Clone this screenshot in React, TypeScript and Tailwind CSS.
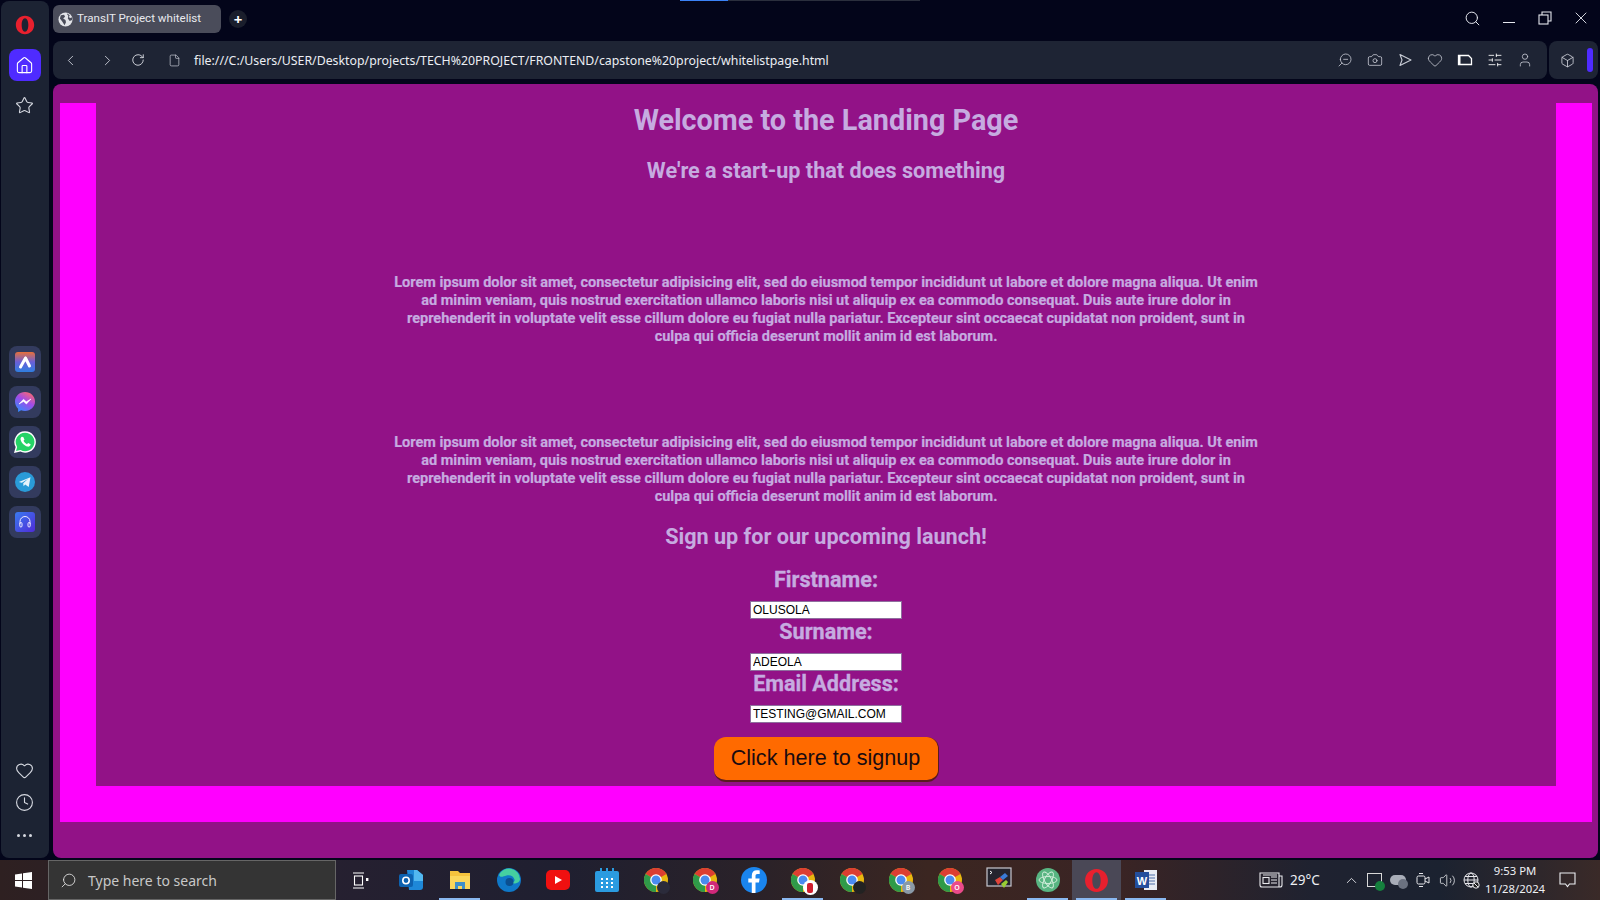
import { Box, Camera, ChevronLeft, ChevronRight, ChevronUp, Clock, File, Heart, Home, RotateCw, Search, SlidersHorizontal, Star, User, Volume2, X, ZoomOut } from "lucide-react";
import type { ReactNode } from "react";

const LOREM =
  "Lorem ipsum dolor sit amet, consectetur adipisicing elit, sed do eiusmod tempor incididunt ut labore et dolore magna aliqua. Ut enim ad minim veniam, quis nostrud exercitation ullamco laboris nisi ut aliquip ex ea commodo consequat. Duis aute irure dolor in reprehenderit in voluptate velit esse cillum dolore eu fugiat nulla pariatur. Excepteur sint occaecat cupidatat non proident, sunt in culpa qui officia deserunt mollit anim id est laborum.";

function OperaLogo({ size }: { size: number }) {
  return (
    <svg width={size} height={size} viewBox="0 0 24 24">
      <path
        fillRule="evenodd"
        fill="#e8202e"
        d="M12 1C5.800 1 1 5.900 1 12s4.800 11 11 11 11-4.900 11-11S18.200 1 12 1Zm0 3c2.500 0 4 3.600 4 8s-1.500 8-4 8-4-3.600-4-8 1.500-8 4-8Z"
      />
    </svg>
  );
}

function Tile({ children }: { children: ReactNode }) {
  return <div className="flex h-8 w-8 items-center justify-center rounded-lg bg-[#333b5e]">{children}</div>;
}

function Sidebar() {
  return (
    <aside className="ml-px mr-1 flex w-[48px] shrink-0 flex-col items-center rounded-lg bg-[#1c2333] pr-px pt-[14px]">
      <OperaLogo size={20} />
      <div className="mt-[14px] flex h-8 w-8 items-center justify-center rounded-lg bg-[#4f2bff]">
        <Home size={19} strokeWidth={1.4} className="text-white" />
      </div>
      <Star size={19} strokeWidth={1.4} className="mt-[15px] text-[#d5d8e0]" />
      <div className="mt-[231px] flex flex-col gap-2">
        <Tile>
          <svg width="20" height="20" viewBox="0 0 20 20">
            <defs>
              <linearGradient id="aria" x1="0.5" y1="0" x2="0.5" y2="1">
                <stop offset="0" stopColor="#e8703a" />
                <stop offset="0.5" stopColor="#6a5fd8" />
                <stop offset="1" stopColor="#2f7fe0" />
              </linearGradient>
            </defs>
            <rect width="20" height="20" rx="3" fill="url(#aria)" />
            <path d="M10.500 6 5.500 15M10.500 6l4 8" stroke="#fff" strokeWidth="3" strokeLinecap="round" />
          </svg>
        </Tile>
        <Tile>
          <svg width="20" height="20" viewBox="0 0 20 20">
            <defs>
              <linearGradient id="msg" x1="0.2" y1="1" x2="0.8" y2="0">
                <stop offset="0" stopColor="#2f8cff" />
                <stop offset="0.55" stopColor="#a04be8" />
                <stop offset="1" stopColor="#ff6a6a" />
              </linearGradient>
            </defs>
            <path d="M10 0C4.400 0 0 4.100 0 9.600c0 2.900 1.200 5.400 3.100 7.100V20l3-1.700c1.200.4 2.500.6 3.900.6 5.600 0 10-4.100 10-9.400S15.600 0 10 0Z" fill="url(#msg)" />
            <path d="m4 12 4.500-4.700 2.800 2.500L16 7l-4.600 5-2.800-2.600Z" fill="#fff" stroke="#fff" strokeWidth="0.6" strokeLinejoin="round" />
          </svg>
        </Tile>
        <Tile>
          <svg width="22" height="22" viewBox="0 0 22 22">
            <path d="M11 1a10 10 0 0 0-8.600 15L1 21l5.200-1.300A10 10 0 1 0 11 1Z" fill="#25d366" stroke="#fff" strokeWidth="1.400" />
            <path d="M7.800 5.800c-.9.500-1.500 1.600-1.200 3 .7 3 3.700 6 6.800 6.800 1.300.3 2.500-.3 3-1.300l.2-1-2.500-1.300-1.100 1.200c-1.500-.6-2.800-1.900-3.500-3.400l1-1.100-1.200-2.600Z" fill="#fff" />
          </svg>
        </Tile>
        <Tile>
          <svg width="20" height="20" viewBox="0 0 20 20">
            <circle cx="10" cy="10" r="10" fill="#2a9bd8" />
            <path d="M3.800 10 15.500 5.200 13.700 15l-3.500-2.600-1.600 1.900-.4-3 5-4.500-6.300 3.900Z" fill="#e8f4fb" />
          </svg>
        </Tile>
        <Tile>
          <div className="flex h-5 w-5 items-center justify-center rounded-[3px] bg-[linear-gradient(135deg,#3a7bf0,#4f2bd8)]">
            <svg width="14" height="14" viewBox="0 0 14 14" fill="none" stroke="#f0eaff" strokeWidth="1">
              <path d="M2 9V6.500a5 5 0 0 1 10 0V9" />
              <rect x="1.800" y="7.500" width="2.200" height="4.500" rx="1.100" />
              <rect x="10" y="7.500" width="2.200" height="4.500" rx="1.100" />
            </svg>
          </div>
        </Tile>
      </div>
      <Heart size={19} strokeWidth={1.4} className="mt-auto text-[#d5d8e0]" />
      <Clock size={19} strokeWidth={1.4} className="mt-[13px] text-[#d5d8e0]" />
      <div className="mb-[21px] mt-[22px] flex gap-[3px]">
        <span className="h-[3px] w-[3px] rounded-full bg-[#d5d8e0]" />
        <span className="h-[3px] w-[3px] rounded-full bg-[#d5d8e0]" />
        <span className="h-[3px] w-[3px] rounded-full bg-[#d5d8e0]" />
      </div>
    </aside>
  );
}

function TabRow() {
  return (
    <div className="flex h-[40px] items-start pt-[4px]">
      <div className="flex h-[28px] w-[168px] items-center rounded-md bg-[#4a4c5a] pl-[5px]">
        <svg width="15" height="15" viewBox="0 0 16 16" className="mr-[4px]">
          <circle cx="8" cy="8" r="7.500" fill="#e2e3e8" />
          <path d="M3 3.500 6.500 3l1 2-2 2 2.500 1.500.5 2.500-1.500 3L4.500 10 2 7ZM10 1.500l2.500 2-1 2 2 1 1.500-1v3l-2.500 1-2-2.500.5-3-1.500-2Z" fill="#4a4c5a" />
        </svg>
        <span className="whitespace-nowrap font-['Roboto',sans-serif] text-[11.600px] text-[#e8e9ee]">TransIT Project whitelist</span>
      </div>
      <div className="ml-2 mt-[5px] flex h-[18px] w-[18px] items-center justify-center rounded-full bg-[#1a1e2c] text-[15px] font-bold leading-none text-white">+</div>
      <div className="ml-auto mr-[7px] mt-[3px] flex items-center gap-[14px] text-[#e5e7ee]">
        <Search size={17} strokeWidth={1.4} />
        <div className="ml-[8px] mr-[9px] mt-[9px] h-px w-[12px] bg-[#e5e7ee]" />
        <svg width="14" height="14" viewBox="0 0 14 14" fill="none" stroke="currentColor" strokeWidth="1.100">
          <rect x="1" y="4" width="9" height="9" />
          <path d="M4 4V1h9v9h-3" />
        </svg>
        <X size={20} strokeWidth={1.1} className="ml-[5px]" />
      </div>
    </div>
  );
}

function AddressBar() {
  return (
    <div className="flex h-[38px] gap-[2px]">
      <div className="flex flex-1 items-center rounded-lg bg-[#1e2434] text-[#c9ccd6]">
        <ChevronLeft size={17} strokeWidth={1.3} className="ml-[9px]" />
        <ChevronRight size={17} strokeWidth={1.3} className="ml-[20px]" />
        <RotateCw size={14} strokeWidth={1.5} className="ml-[15px] text-[#dfe1e8]" />
        <File size={13} strokeWidth={1.3} className="ml-[23px]" />
        <span className="ml-[13px] mt-[2px] whitespace-nowrap font-['Noto_Sans',sans-serif] text-[12.330px] text-[#eceef3]">
          file:///C:/Users/USER/Desktop/projects/TECH%20PROJECT/FRONTEND/capstone%20project/whitelistpage.html
        </span>
        <div className="ml-auto mr-[14px] flex items-center gap-[14px]">
          <ZoomOut size={16} strokeWidth={1.2} className="-scale-x-100" />
          <Camera size={16} strokeWidth={1.2} />
          <svg width="16" height="16" viewBox="0 0 16 16" fill="none" stroke="currentColor" strokeWidth="1.100" strokeLinejoin="round">
            <path d="m3 2.500 11 5.500-11 5.500L5 8Z" />
          </svg>
          <Heart size={16} strokeWidth={1.2} />
          <svg width="16" height="16" viewBox="0 0 16 16" className="text-white">
            <path d="M1.500 3.500h10l3 3v6h-13Z" fill="none" stroke="currentColor" strokeWidth="1.300" />
            <rect x="1.500" y="3.500" width="2" height="9" fill="currentColor" />
          </svg>
          <SlidersHorizontal size={16} strokeWidth={1.3} className="text-white" />
          <User size={16} strokeWidth={1.2} />
        </div>
      </div>
      <div className="flex w-[49px] items-center rounded-lg bg-[#1e2434] pl-[11px] text-[#d5d8e0]">
        <Box size={15} strokeWidth={1.3} />
        <div className="ml-[12px] h-[24px] w-[6px] rounded-full bg-[#4f2bff]" />
      </div>
    </div>
  );
}

function Field({ label, value }: { label: string; value: string }) {
  return (
    <>
      <label className="text-[21.600px] font-bold leading-[26px] [-webkit-text-stroke:0.3px_#c6abe0]">{label}</label>
      <input
        readOnly
        value={value}
        className="mt-2 h-[18px] w-[152px] border border-[#8f6f9e] bg-white px-[2px] font-['Liberation_Sans',sans-serif] text-[12px] font-normal leading-none text-black outline-none"
      />
    </>
  );
}

function LandingPage() {
  return (
    <main className="flex-1 overflow-hidden rounded-lg bg-[#921287] pb-[36px] pl-[7px] pr-[6px] pt-[19px]">
      <div className="bg-[#ff00ff] px-[36px] pb-[36px]">
        <div className="flex h-[683px] flex-col items-center bg-[#921287] pt-px text-center font-['Roboto',sans-serif] font-bold text-[#c6abe0]">
          <h1 className="text-[28.800px] leading-[33px]">Welcome to the Landing Page</h1>
          <h2 className="mt-[20px] text-[21.600px] leading-[28px]">We're a start-up that does something</h2>
          <p className="mt-[89px] w-[870px] text-[14.500px] leading-[18px] [-webkit-text-stroke:0.2px_#c6abe0]">{LOREM}</p>
          <p className="mt-[88px] w-[870px] text-[14.500px] leading-[18px] [-webkit-text-stroke:0.2px_#c6abe0]">{LOREM}</p>
          <h2 className="mt-[17px] text-[21.600px] leading-[28px]">Sign up for our upcoming launch!</h2>
          <div className="mt-[16px] flex flex-col items-center">
            <Field label="Firstname:" value="OLUSOLA" />
            <Field label="Surname:" value="ADEOLA" />
            <Field label="Email Address:" value="TESTING@GMAIL.COM" />
          </div>
          <button className="mt-[14px] h-[45px] w-[225px] rounded-xl border-b-2 border-r border-[#5a1a20] bg-[#ff6a00] font-['Liberation_Sans',sans-serif] text-[21.600px] font-normal text-[#1a0a10]">
            Click here to signup
          </button>
        </div>
      </div>
    </main>
  );
}

function Chrome({ badge, label, large }: { badge: string; label?: string; large?: boolean }) {
  return (
    <div className="relative h-6 w-6">
      <svg width="24" height="24" viewBox="0 0 24 24">
        <circle cx="12" cy="12" r="12" fill="#e8b80f" />
        <path d="M12 12 1.600 6A12 12 0 0 1 22.400 6Z" fill="#dc3e32" />
        <path d="M12 12 1.600 6A12 12 0 0 0 12 24Z" fill="#2f9a49" />
        <circle cx="12" cy="12" r="5.800" fill="#fff" />
        <circle cx="12" cy="12" r="4.500" fill="#4a8bf0" />
      </svg>
      {large ? (
        <div className="absolute -bottom-[3px] -right-[3px] flex h-[15px] w-[15px] items-center justify-center rounded-full bg-white">
          <div className="h-[10px] w-[6px] rounded-[2px]" style={{ background: badge }} />
        </div>
      ) : (
        <div
          className="absolute -bottom-[2px] -right-[2px] flex h-[13px] w-[13px] items-center justify-center rounded-full text-[7px] font-semibold leading-none text-white"
          style={{ background: badge }}
        >
          {label}
        </div>
      )}
    </div>
  );
}

// one taskbar cell, 49px wide; active puts the light-blue line under it
function Cell({ children, active, current }: { children: ReactNode; active?: boolean; current?: boolean }) {
  return (
    <div className={`relative flex h-[40px] w-[49px] items-center justify-center ${current ? "bg-[#4a4856]" : ""}`}>
      {children}
      {active && <div className="absolute bottom-0 left-[4px] right-[4px] h-[2px] bg-[#8ab8f0]" />}
    </div>
  );
}

function Taskbar() {
  return (
    <footer className="flex h-[40px] shrink-0 items-center bg-[linear-gradient(90deg,#2e2021_0%,#262030_20%,#1f1f30_35%,#2b2228_48%,#3b2621_58%,#3a2424_70%,#1f2230_82%,#1b2230_90%,#3a2a28_100%)] font-['Noto_Sans',sans-serif] text-[#eef0f4]">
      <div className="flex w-[48px] justify-center pr-px">
        <svg width="17" height="17" viewBox="0 0 17 17" fill="#fff">
          <path d="M0 2.400 7 1.400V8H0ZM8 1.200 17 0v8H8ZM0 9h7v6.600l-7-1ZM8 9h9v8l-9-1.200Z" />
        </svg>
      </div>
      <div className="flex h-[40px] w-[288px] items-center border border-[#666] bg-[#343434] pl-[11px]">
        <Search size={17} strokeWidth={1.2} className="-scale-x-100 text-[#e5e5e5]" />
        <span className="ml-[11px] text-[14px] text-[#c8c8c8]">Type here to search</span>
      </div>
      <div className="flex w-[49px] justify-center pr-px">
        <svg width="17" height="17" viewBox="0 0 17 17" fill="none" stroke="#fff" strokeWidth="1.100">
          <path d="M1 1h11M1 16h11" />
          <rect x="2.500" y="4" width="8" height="9" />
          <rect x="14" y="6" width="2.400" height="3" fill="#fff" stroke="none" />
        </svg>
      </div>
      <div className="ml-[1px] flex">
        <Cell>
          <svg width="26" height="26" viewBox="0 0 26 26">
            <path d="M9 3h10l6 5v12a3 3 0 0 1-3 3H11Z" fill="#1e88d8" />
            <path d="M16 3h3l6 5v6h-9Z" fill="#52b8f0" />
            <rect x="1" y="7" width="14" height="13" rx="2" fill="#0d62b0" />
            <circle cx="8" cy="13.500" r="3.200" fill="none" stroke="#fff" strokeWidth="1.600" />
          </svg>
        </Cell>
        <Cell active>
          <svg width="24" height="24" viewBox="0 0 24 24">
            <path d="M2 3h8l2 2h10v16H2Z" fill="#f5c33d" />
            <path d="M2 8h20v13H2Z" fill="#fbd75b" />
            <path d="M7 21v-7h10v7h-3v-3h-4v3Z" fill="#3f8fc8" />
          </svg>
        </Cell>
        <Cell>
          <svg width="24" height="24" viewBox="0 0 24 24">
            <circle cx="12" cy="12" r="12" fill="#0f78c8" />
            <path d="M2 7a11 11 0 0 1 21 4c0 3-3 4.500-6 4.500-2 0-3-1-3-1 3 0 4-1.500 3.500-3C16.500 8 13 6.500 9.500 7.500 6 8.500 3.500 10 2 7Z" fill="#45d0a0" />
            <circle cx="12.500" cy="14" r="4" fill="#0b4f90" />
          </svg>
        </Cell>
        <Cell>
          <div className="flex h-5 w-6 items-center justify-center rounded-[5px] bg-[#f01010]">
            <svg width="8" height="8" viewBox="0 0 8 8" fill="#fff">
              <path d="M1 0l7 4-7 4Z" />
            </svg>
          </div>
        </Cell>
        <Cell>
          <svg width="24" height="24" viewBox="0 0 24 24">
            <rect y="3" width="24" height="21" rx="2" fill="#2b9be0" />
            <path d="M6 0v6M12 0v6M18 0v6" stroke="#2b9be0" strokeWidth="2" />
            <path d="M6 11h2M11 11h2M16 11h2M6 15h2M11 15h2M16 15h2M6 19h2M11 19h2M16 19h2" stroke="#fff" strokeWidth="2" />
          </svg>
        </Cell>
        <Cell><Chrome badge="#2b2b3b" /></Cell>
        <Cell><Chrome badge="#d0287a" label="D" /></Cell>
        <Cell>
          <svg width="26" height="26" viewBox="0 0 26 26">
            <circle cx="13" cy="13" r="13" fill="#1a85ee" />
            <path d="M14.500 26V15.500h3.500l.6-4h-4.100V9c0-1.200.5-2 2-2h2.200V3.500c-.8-.1-1.800-.2-2.900-.2-3 0-5 1.800-5 5.200v3H7.300v4h3.500V26Z" fill="#fff" />
          </svg>
        </Cell>
        <Cell active><Chrome badge="#d01f2f" large /></Cell>
        <Cell><Chrome badge="#222" /></Cell>
        <Cell><Chrome badge="#8a9aa8" label="B" /></Cell>
        <Cell><Chrome badge="#ea4a8a" label="O" /></Cell>
        <Cell>
          <svg width="26" height="26" viewBox="0 0 26 26">
            <rect x="1" y="1" width="24" height="18" fill="#24242e" stroke="#c8c8d0" strokeWidth="1.200" />
            <path d="M4 4l2 1.500L4 7" stroke="#fff" fill="none" />
            <path d="m9 13 5-3 3 3-5 5Z" fill="#e0443a" />
            <path d="m14 10 5-4 3 3-5 4Z" fill="#3a7bd8" />
            <path d="m15 17 5-4 2 2-4 6Z" fill="#9acd32" />
          </svg>
        </Cell>
        <Cell active>
          <svg width="24" height="24" viewBox="0 0 24 24">
            <circle cx="12" cy="12" r="12" fill="#58b582" />
            <g fill="none" stroke="#d8f0e0" strokeWidth="0.900">
              <ellipse cx="12" cy="12" rx="9" ry="3.500" />
              <ellipse cx="12" cy="12" rx="9" ry="3.500" transform="rotate(60 12 12)" />
              <ellipse cx="12" cy="12" rx="9" ry="3.500" transform="rotate(120 12 12)" />
            </g>
          </svg>
        </Cell>
        <Cell active current><OperaLogo size={25} /></Cell>
        <Cell active>
          <svg width="24" height="24" viewBox="0 0 24 24">
            <rect x="10" y="2" width="13" height="20" fill="#e8ecf4" />
            <path d="M13 7h8M13 10h8M13 13h8M13 16h8" stroke="#4f6fa8" strokeWidth="1.200" />
            <rect x="1" y="4" width="14" height="16" fill="#234e9c" />
            <text x="8" y="16.500" textAnchor="middle" fontSize="11" fontWeight="700" fill="#fff" fontFamily="Liberation Sans">W</text>
          </svg>
        </Cell>
      </div>
      <div className="ml-auto mr-[10px] flex items-center text-[#eef0f4]">
        <svg width="24" height="16" viewBox="0 0 24 16" fill="none" stroke="#e8e8ec" strokeWidth="1.100">
          <path d="M1 1h19v14H3a2 2 0 0 1-2-2ZM20 4h3v9a2 2 0 0 1-2 2h-1" />
          <rect x="4" y="5.500" width="6" height="6" />
          <path d="M12 5h6M12 8h6M12 11h6M4 3h14" />
        </svg>
        <span className="ml-[7px] w-[31px] whitespace-nowrap text-[13.500px]">29°C</span>
        <ChevronUp size={17} strokeWidth={1.2} className="ml-[22px]" />
        <div className="relative ml-[7px] h-[14px] w-[15px] border border-[#d8d8d8]">
          <div className="absolute -bottom-[5px] -right-[4px] h-[10px] w-[10px] rounded-full bg-[#15803d]" />
        </div>
        <div className="relative ml-[8px] h-[10px] w-[16px] rounded-full bg-[#a8adb8]">
          <div className="absolute -bottom-[4px] -right-[2px] h-[10px] w-[10px] rounded-full bg-[#6b7280]" />
        </div>
        <svg width="16" height="16" viewBox="0 0 16 16" fill="none" stroke="#e8e8ec" strokeWidth="1" className="ml-[9px]">
          <rect x="2" y="4" width="8" height="8" rx="1.500" />
          <path d="m10 7 4-2v6l-4-2M4 1.500h4M4 14.500h4" />
        </svg>
        <Volume2 size={17} strokeWidth={1.1} className="ml-[8px]" />
        <svg width="17" height="17" viewBox="0 0 17 17" fill="none" stroke="#e8e8ec" strokeWidth="1" className="ml-[7px]">
          <circle cx="8" cy="8" r="7" />
          <ellipse cx="8" cy="8" rx="3.200" ry="7" />
          <path d="M1 8h14M2 4.500h12M2 11.500h12" />
          <circle cx="13" cy="13" r="3.200" fill="#222" />
          <path d="m11 11 4 4" />
        </svg>
        <div className="ml-[5px] flex w-[60px] flex-col items-center text-[11.300px] leading-[18px]">
          <span>9:53 PM</span>
          <span>11/28/2024</span>
        </div>
        <div className="-ml-px flex h-[40px] w-[46px] items-center justify-center">
          <svg width="17" height="16" viewBox="0 0 17 16" fill="none" stroke="#eef0f4" strokeWidth="1.100">
            <path d="M1 1h15v11h-5.500l-2 2.500-2-2.500H1Z" />
          </svg>
        </div>
      </div>
    </footer>
  );
}

export default function App() {
  return (
    <div className="relative flex h-[900px] w-[1600px] flex-col overflow-hidden bg-[#03051a]">
      <div className="absolute left-[680px] top-0 flex h-px">
        <div className="w-[48px] bg-[#3b82f6]" />
        <div className="w-[192px] bg-[#2b2f3d]" />
      </div>
      <div className="flex h-[858px] pt-px">
        <Sidebar />
        <div className="flex min-w-0 flex-1 flex-col pr-[2px]">
          <TabRow />
          <AddressBar />
          <div className="flex flex-1 pt-[5px]">
            <LandingPage />
          </div>
        </div>
      </div>
      <div className="h-[2px] shrink-0" />
      <Taskbar />
    </div>
  );
}
